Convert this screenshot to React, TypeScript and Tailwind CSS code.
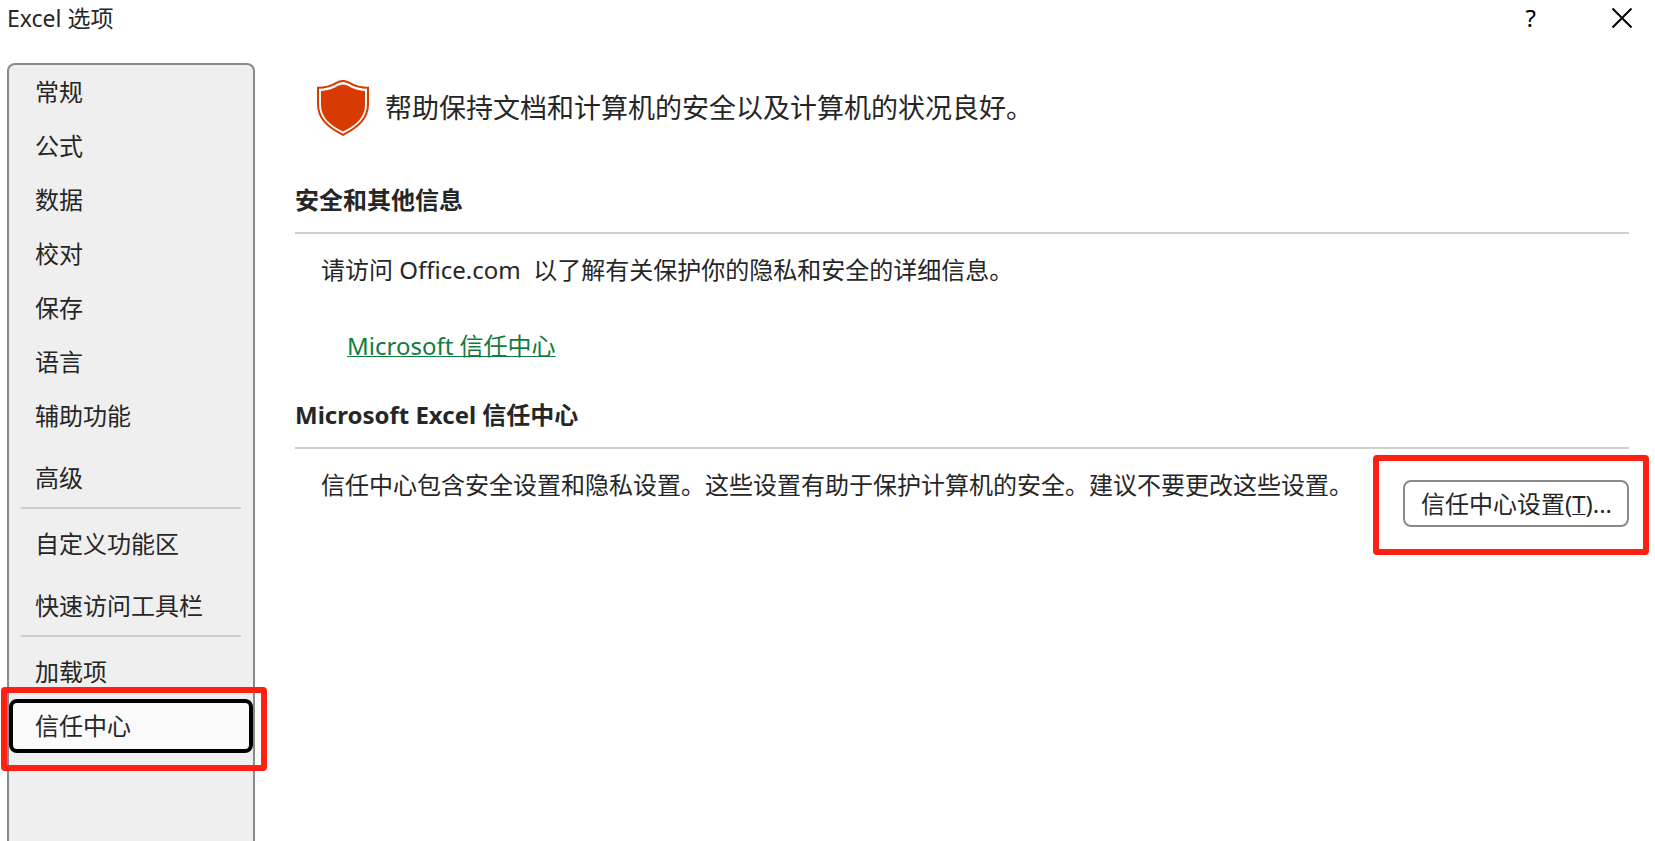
import type { ReactNode } from 'react';

const navGroups: string[][][] = [
  [['常规', '公式', '数据', '校对', '保存', '语言', '辅助功能'], ['高级']],
  [['自定义功能区'], ['快速访问工具栏']],
  [['加载项', '信任中心']],
];

const selected = '信任中心';

function NavItem({ label }: { label: string }) {
  const active = label === selected;
  return (
    <li className="relative">
      <button
        type="button"
        aria-current={active ? 'page' : undefined}
        className={
          active
            ? 'flex h-[54px] w-full items-center rounded-lg border-4 border-black bg-[#fafafa] pl-[22px] text-left'
            : 'flex h-[54px] w-full items-center pl-[26px] text-left'
        }
      >
        {label}
      </button>
      {active && (
        <span className="pointer-events-none absolute -top-3 -right-3.5 -bottom-[18px] -left-2 rounded border-6 border-[#ff2012]" />
      )}
    </li>
  );
}

function Sidebar() {
  return (
    <nav
      aria-label="Excel 选项"
      className="w-[248px] shrink-0 rounded-t-lg border-2 border-b-0 border-[#8a8a8a] bg-[#efefef]"
    >
      {navGroups.map((group, i) => (
        <div key={i}>
          {i > 0 && <hr className="mx-3 mt-0.5 mb-2 border-t-2 border-[#cfcfcf]" />}
          <div className="flex flex-col gap-2">
            {group.map((items) => (
              <ul key={items[0]}>
                {items.map((label) => (
                  <NavItem key={label} label={label} />
                ))}
              </ul>
            ))}
          </div>
        </div>
      ))}
    </nav>
  );
}

function SectionTitle({ children }: { children: ReactNode }) {
  return (
    <h2 className="border-b-2 border-[#cfcfcf] pb-4 leading-8 font-bold">{children}</h2>
  );
}

function ShieldIcon() {
  return (
    <svg width="52" height="56" viewBox="0 0 52 56" fill="none" aria-hidden="true" className="shrink-0">
      <path
        d="M1 7.8C10 7.8 15 5.5 19.500 2.800Q26 -0.800 32.500 2.800C37 5.500 42 7.800 51 7.800V24C51 38 42 47 26 54.800C10 47 1 38 1 24Z"
        stroke="#d83b01"
        strokeWidth="2"
      />
      <path
        d="M4 11C12 10.500 16.500 8.500 20.500 6Q26 2.800 31.500 6C35.500 8.500 40 10.500 48 11V25C48 36.500 40 45 26 51.500C12 45 4 36.500 4 25Z"
        fill="#d83b01"
      />
    </svg>
  );
}

export default function App() {
  return (
    <div className="flex min-h-screen flex-col overflow-hidden bg-white font-['Noto_Sans','Noto_Sans_CJK_SC',sans-serif] text-2xl leading-8 text-[#262626]">
      <header className="flex h-[63px] items-start justify-between pr-[22px] pl-[7px]">
        <h1 className="pt-0.5 text-[23px] leading-8">Excel 选项</h1>
        <div className="flex items-center gap-[75px] text-black">
          <button type="button" aria-label="帮助" className="pt-0.5 leading-8">
            ?
          </button>
          <button type="button" aria-label="关闭" className="pt-0.5">
            <svg width="22" height="22" viewBox="0 0 22 22" stroke="currentColor" strokeWidth="2" aria-hidden="true">
              <path d="M1.500 1.500L20.500 20.500M20.500 1.500L1.500 20.500" />
            </svg>
          </button>
        </div>
      </header>
      <div className="flex flex-1 pl-[7px]">
        <Sidebar />
        <main className="min-w-0 flex-1 pr-[26px] pl-10">
          <div className="flex items-center gap-4 pt-[17px] pl-[22px]">
            <ShieldIcon />
            <p className="text-[27px] leading-10">帮助保持文档和计算机的安全以及计算机的状况良好。</p>
          </div>
          <section className="mt-12">
            <SectionTitle>安全和其他信息</SectionTitle>
            <div className="pt-5 pl-[26px]">
              <p className="whitespace-pre">请访问 Office.com  以了解有关保护你的隐私和安全的详细信息。</p>
              <a href="#trust-center" className="mt-11 ml-[26px] inline-block text-[#107c41] underline decoration-1">
                Microsoft 信任中心
              </a>
            </div>
          </section>
          <section className="mt-[37px]">
            <SectionTitle>Microsoft Excel 信任中心</SectionTitle>
            <div className="flex items-start justify-between pt-5 pl-[26px]">
              <p>信任中心包含安全设置和隐私设置。这些设置有助于保护计算机的安全。建议不要更改这些设置。</p>
              <div className="relative mt-[11px] shrink-0">
                <button
                  type="button"
                  className="flex h-[47px] items-center rounded-lg border-2 border-[#8a8a8a] bg-white pr-[15px] pl-4"
                >
                  信任中心设置(<span className="underline decoration-1">T</span>)...
                </button>
                <span className="pointer-events-none absolute -top-[25px] -right-5 -bottom-7 -left-[30px] rounded border-6 border-[#ff2012]" />
              </div>
            </div>
          </section>
        </main>
      </div>
    </div>
  );
}
